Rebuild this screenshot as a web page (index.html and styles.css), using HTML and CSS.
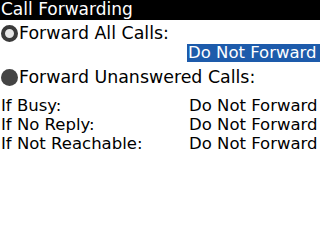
FILE: index.html
```html
<!DOCTYPE html>
<html>
<head>
<meta charset="utf-8">
<link rel="stylesheet" href="styles.css">
</head>
<body>
<div class="screen">
  <div class="title">Call Forwarding</div>
  <div class="option first">
    <span class="radio on"></span>
    <span class="option-label">Forward All Calls:</span>
  </div>
  <div class="choice-row">
    <span class="choice selected">Do Not Forward</span>
  </div>
  <div class="option second">
    <span class="radio off"></span>
    <span class="option-label">Forward Unanswered Calls:</span>
  </div>
  <div class="grid">
    <span class="label">If Busy:</span><span class="value">Do Not Forward</span>
    <span class="label">If No Reply:</span><span class="value">Do Not Forward</span>
    <span class="label">If Not Reachable:</span><span class="value">Do Not Forward</span>
  </div>
</div>
</body>
</html>
```

FILE: styles.css
```css
html, body {
  margin: 0;
  padding: 0;
  background: #fff;
}
.screen {
  width: 320px;
  height: 240px;
  overflow: hidden;
  font-family: "DejaVu Sans", sans-serif;
  font-size: 16.5px;
  line-height: 19px;
  color: #000;
}
.title {
  background: #000;
  color: #fff;
  height: 20px;
  padding: 0 0 0 1px;
  box-sizing: border-box;
  font-size: 17px;
  white-space: nowrap;
}
.option {
  display: flex;
  align-items: center;
  gap: 1px;
  padding-left: 1px;
  height: 19px;
  white-space: nowrap;
}
.option-label {
  font-size: 17.4px;
}
.option.first {
  margin-top: 4px;
}
.option.second {
  margin-top: 6px;
}
.radio {
  width: 17px;
  height: 17px;
  border-radius: 50%;
  box-sizing: border-box;
  flex: none;
}
.radio.on {
  background: #e6e6e6;
  border: 4.5px solid #3a3a3a;
}
.radio.off {
  background: #444;
}
.choice-row {
  display: flex;
  padding-left: 187px;
  margin-top: 1px;
}
.choice {
  flex: 1;
  height: 18px;
  line-height: 18px;
  padding-left: 1px;
  white-space: nowrap;
}
.choice.selected {
  background: #1d5bab;
  color: #fff;
}
.grid {
  display: grid;
  grid-template-columns: 188px 1fr;
  margin-top: 9px;
  padding-left: 1px;
  white-space: nowrap;
}
```
